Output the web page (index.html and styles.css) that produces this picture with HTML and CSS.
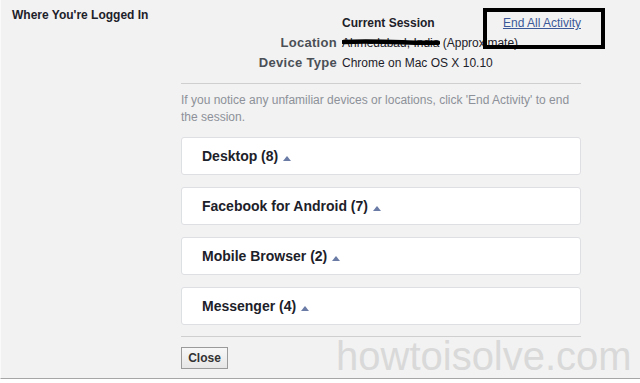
FILE: index.html
```html
<!DOCTYPE html>
<html>
<head>
<meta charset="utf-8">
<link rel="stylesheet" href="styles.css">
</head>
<body>
<div class="page">
  <div class="side">
    <div class="side-title">Where You're Logged In</div>
  </div>
  <div class="main">
    <div class="info">
      <div class="label"></div>
      <div class="value head"><span class="strong">Current Session</span><a class="end-link" href="#">End All Activity</a></div>
      <div class="label">Location</div>
      <div class="value">Ahmedabad, India (Approximate)</div>
      <div class="label">Device Type</div>
      <div class="value">Chrome on Mac OS X 10.10</div>
    </div>
    <div class="help">If you notice any unfamiliar devices or locations, click 'End Activity' to end the session.</div>
    <div class="cards">
      <div class="card">Desktop (8)<svg class="tri" width="8" height="5" viewBox="0 0 8 5"><polygon points="4,0 8,5 0,5"/></svg></div>
      <div class="card">Facebook for Android (7)<svg class="tri" width="8" height="5" viewBox="0 0 8 5"><polygon points="4,0 8,5 0,5"/></svg></div>
      <div class="card">Mobile Browser (2)<svg class="tri" width="8" height="5" viewBox="0 0 8 5"><polygon points="4,0 8,5 0,5"/></svg></div>
      <div class="card">Messenger (4)<svg class="tri" width="8" height="5" viewBox="0 0 8 5"><polygon points="4,0 8,5 0,5"/></svg></div>
    </div>
    <div class="footer">
      <button class="close-btn">Close</button>
    </div>
  </div>
  <svg class="scribble" width="98" height="9" viewBox="0 0 98 9"><path d="M1.5 4 C20 3 40 3.5 60 4.3 S85 5 96 4.7" stroke="#000" stroke-width="4.5" fill="none" stroke-linecap="round"/></svg>
  <div class="highlight"></div>
  <div class="watermark">howtoisolve.com</div>
</div>
</body>
</html>
```

FILE: styles.css
```css
html, body {
  margin: 0;
  padding: 0;
  background: #ffffff;
}

.page {
  position: relative;
  display: flex;
  height: 379px;
  box-sizing: border-box;
  background: #f2f2f2;
  border-bottom: 1px solid #a6a6a6;
  border-left: 1px solid #fafafa;
  font-family: "Liberation Sans", Arial, sans-serif;
  font-size: 12px;
  color: #1d2129;
}

.side {
  width: 180px;
  box-sizing: border-box;
  padding: 8px 0 0 11px;
}

.side-title {
  font-weight: bold;
  line-height: 14px;
}

.main {
  width: 400px;
  padding-top: 13px;
}

.info {
  display: grid;
  grid-template-columns: 156px 1fr;
  column-gap: 5px;
  line-height: 20px;
  padding-bottom: 10px;
  border-bottom: 1px solid #cfcfcf;
}

.label {
  text-align: right;
  font-size: 13px;
  letter-spacing: 0.3px;
  font-weight: bold;
  color: #4b4f56;
}

.head {
  display: flex;
  justify-content: space-between;
}

.strong {
  font-weight: bold;
}

.end-link {
  color: #3b5998;
  text-decoration: underline;
}

.help {
  padding-top: 8px;
  line-height: 17px;
  color: #8d9199;
}

.cards {
  margin-top: 11px;
  display: flex;
  flex-direction: column;
  gap: 12px;
}

.card {
  height: 38px;
  box-sizing: border-box;
  display: flex;
  align-items: center;
  padding-left: 20px;
  background: #ffffff;
  border: 1px solid #dddfe2;
  border-radius: 3px;
  font-size: 14px;
  font-weight: bold;
  color: #1d2129;
}

.tri {
  margin-left: 5px;
  margin-top: 5px;
  fill: #6a7ba6;
}

.footer {
  margin-top: 11px;
  border-top: 1px solid #cfcfcf;
  padding-top: 10px;
}

.close-btn {
  width: 47px;
  height: 22px;
  padding: 0;
  margin: 0;
  border: 1px solid #9a9a9a;
  border-radius: 0;
  background: linear-gradient(#f7f7f7, #e6e6e6);
  font-family: "Liberation Sans", Arial, sans-serif;
  font-size: 12px;
  font-weight: bold;
  color: #333333;
}

.scribble {
  position: absolute;
  left: 341px;
  top: 38px;
}

.highlight {
  position: absolute;
  left: 482px;
  top: 8px;
  width: 122px;
  height: 41px;
  box-sizing: border-box;
  border: 4px solid #000000;
}

.watermark {
  position: absolute;
  left: 335px;
  top: 336px;
  font-family: "Liberation Sans", Arial, sans-serif;
  font-size: 40px;
  line-height: 40px;
  color: #d9d9d9;
  white-space: nowrap;
}
```
